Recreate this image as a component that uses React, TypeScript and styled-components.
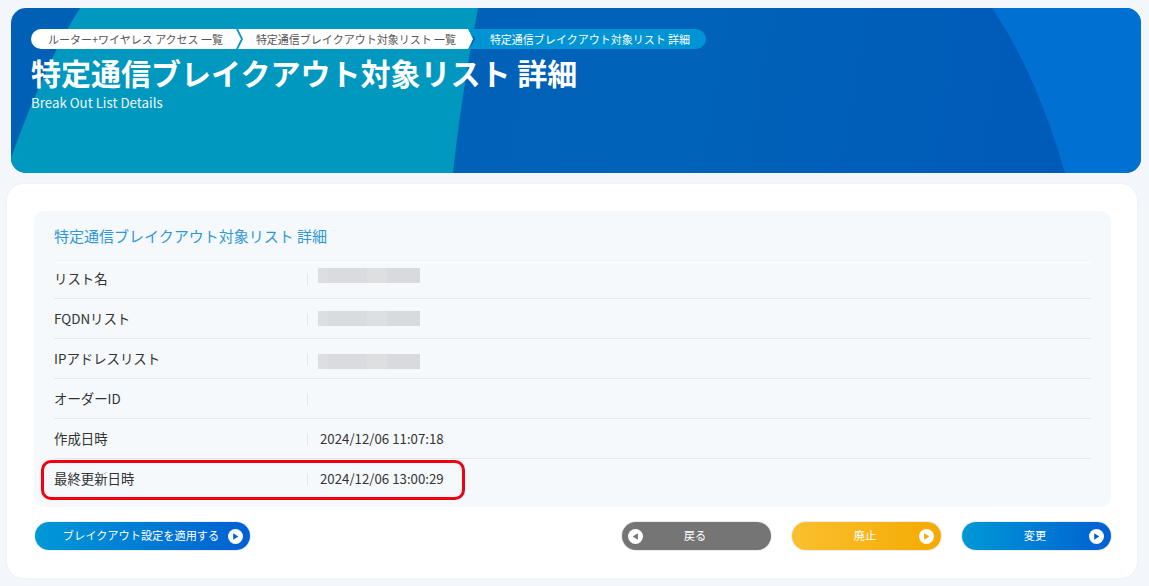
import React from "react";
import styled, { createGlobalStyle } from "styled-components";

const Global = createGlobalStyle`
  html, body { margin: 0; padding: 0; background: #f3f7fb; }
  body { font-family: "Noto Sans CJK JP", "Noto Sans", sans-serif; color: #333; }
  * { box-sizing: border-box; }
`;

const Page = styled.div`
  width: 1149px;
  height: 586px;
  overflow: hidden;
  padding: 8px 8px 8px 8px;
  display: flex;
  flex-direction: column;
  gap: 11px;
`;

const Hero = styled.header`
  position: relative;
  margin-left: 3px;
  width: 1130px;
  height: 165px;
  border-radius: 15px;
  overflow: hidden;
  background: linear-gradient(100deg, #0060b6 0%, #0062b8 60%, #0058b8 100%);
  padding: 21px 20px 0;
`;

const HeroArt = styled.svg`
  position: absolute;
  inset: 0;
  width: 100%;
  height: 100%;
`;

const HeroContent = styled.div`
  position: relative;
`;

const Crumbs = styled.ol`
  list-style: none;
  display: flex;
  margin: 0;
  padding: 0;
  height: 20px;
`;

const Crumb = styled.li<{ $active?: boolean; $first?: boolean; $w: number }>`
  width: ${(p) => p.$w}px;
  height: 20px;
  margin-right: ${(p) => (p.$active ? 0 : -3)}px;
  display: flex;
  align-items: center;
  justify-content: center;
  font-size: 11px;
  line-height: 20px;
  white-space: nowrap;
  padding: ${(p) => (p.$first ? "0 1px 0 0" : p.$active ? "0 0 0 4px" : "0 0 0 1px")};
  background: ${(p) => (p.$active ? "#0094d4" : "#fff")};
  color: ${(p) => (p.$active ? "#fff" : "#555")};
  border-radius: ${(p) => (p.$first ? "10px 0 0 10px" : p.$active ? "0 10px 10px 0" : "0")};
  clip-path: ${(p) =>
    p.$active
      ? "polygon(0 0, 100% 0, 100% 100%, 0 100%, 5px 50%)"
      : p.$first
      ? "polygon(0 0, calc(100% - 5px) 0, 100% 50%, calc(100% - 5px) 100%, 0 100%)"
      : "polygon(0 0, calc(100% - 5px) 0, 100% 50%, calc(100% - 5px) 100%, 0 100%, 5px 50%)"};
`;

const HeroTitle = styled.h1`
  margin: 0;
  font-size: 30px;
  line-height: 46px;
  font-weight: 700;
  color: #fff;
  white-space: nowrap;
`;

const HeroSub = styled.p`
  margin: -2px 0 0;
  font-size: 13.3px;
  line-height: 20px;
  color: #eef7fb;
`;

const Card = styled.main`
  margin-left: -1px;
  width: 1130px;
  height: 394px;
  background: #fff;
  border-radius: 16px;
  padding: 27px 26px 0 27px;
  box-shadow: 0 0 2px rgba(190, 205, 220, 0.35);
`;

const Panel = styled.section`
  width: 1077px;
  height: 296px;
  background: #f5f9fc;
  border-radius: 10px;
  padding: 13px 20px 0;
`;

const PanelTitle = styled.h2`
  margin: 0;
  height: 38px;
  font-size: 15px;
  line-height: 24px;
  font-weight: 400;
  color: #2f97d6;
  white-space: nowrap;
`;

const Row = styled.div<{ $first?: boolean }>`
  position: relative;
  height: ${(p) => (p.$first ? 36 : 40)}px;
  padding-bottom: ${(p) => (p.$first ? 4 : 0)}px;
  display: grid;
  grid-template-columns: 253px 1fr;
  align-items: center;
  border-top: ${(p) => (p.$first ? "1px solid #fff" : "1px solid #e4e8ec")};
`;

const Label = styled.div`
  margin-bottom: 2px;
  font-size: 13.4px;
  line-height: 20px;
  color: #333;
  white-space: nowrap;
`;

const Value = styled.div`
  height: 12px;
  border-left: 1px solid #e2e6ea;
  padding-left: 12px;
  display: flex;
  align-items: center;
  font-size: 13.25px;
  color: #333;
  white-space: nowrap;
`;

const Redacted = styled.div<{ $top: number }>`
  position: absolute;
  left: 264px;
  top: ${(p) => p.$top}px;
  width: 102px;
  height: 15px;
  background: linear-gradient(90deg, #dcdee1 0 10%, #d9dbde 10% 48%, #dddfe1 48% 68%, #d8dadd 68% 100%);
`;

const Highlight = styled.div`
  position: absolute;
  left: -13px;
  top: 1px;
  width: 424px;
  height: 40px;
  border: 3px solid #f00010;
  border-radius: 10px;
  pointer-events: none;
`;

const Actions = styled.div`
  display: flex;
  align-items: center;
  margin: 15px 0 0 1px;
`;

const Button = styled.button<{ $tone: "blue" | "gray" | "amber"; $w: number }>`
  position: relative;
  width: ${(p) => p.$w}px;
  height: 28px;
  border: 0;
  border-radius: 14px;
  padding: 0 3px 2px 0;
  margin-left: ${(p) => (p.$w > 200 ? 0 : 21)}px;
  font: inherit;
  font-size: 11.2px;
  line-height: 26px;
  color: #fff;
  text-align: center;
  box-shadow: 0 0 0 1px rgba(225, 230, 236, 0.7);
  background: ${(p) =>
    p.$tone === "gray"
      ? "#757575"
      : p.$tone === "amber"
      ? "linear-gradient(90deg, #f9c02e, #f5aa02)"
      : "linear-gradient(90deg, #0098d6, #0060d2)"};
`;

const BtnIcon = styled.svg<{ $left?: boolean }>`
  position: absolute;
  top: 6.5px;
  ${(p) => (p.$left ? "left: 6px;" : "right: 7px;")}
  width: 15px;
  height: 15px;
`;

const Spacer = styled.div`
  width: 351px;
  flex: none;
`;

const Circle: React.FC<{ left?: boolean; color: string }> = ({ left, color }) => (
  <BtnIcon $left={left} viewBox="0 0 16 16">
    <circle cx="8" cy="8" r="8" fill="#fff" />
    <path d={left ? "M10.5 4.5v7L5 8z" : "M5.5 4.5v7L11 8z"} fill={color} />
  </BtnIcon>
);

export default function App() {
  return (
    <Page>
      <Global />
      <Hero>
        <HeroArt viewBox="0 0 1130 165" preserveAspectRatio="none" aria-hidden="true">
          <path d="M69 0 H467 Q450 90 442 165 H0 V150 Q34 55 69 0 Z" fill="#0098bf" />
          <path d="M981 0 H1130 V165 H1054 Q1025 65 981 0 Z" fill="#0071d2" />
        </HeroArt>
        <HeroContent>
          <Crumbs>
            <Crumb $first $w={210}>ルーター+ワイヤレス アクセス 一覧</Crumb>
            <Crumb $w={235}>特定通信ブレイクアウト対象リスト 一覧</Crumb>
            <Crumb $active $w={236}>特定通信ブレイクアウト対象リスト 詳細</Crumb>
          </Crumbs>
          <HeroTitle>特定通信ブレイクアウト対象リスト 詳細</HeroTitle>
          <HeroSub>Break Out List Details</HeroSub>
        </HeroContent>
      </Hero>
      <Card>
        <Panel>
          <PanelTitle>特定通信ブレイクアウト対象リスト 詳細</PanelTitle>
          <Row $first>
            <Label>リスト名</Label>
            <Value />
            <Redacted $top={5} />
          </Row>
          <Row>
            <Label>FQDNリスト</Label>
            <Value />
            <Redacted $top={12} />
          </Row>
          <Row>
            <Label>IPアドレスリスト</Label>
            <Value />
            <Redacted $top={15} />
          </Row>
          <Row>
            <Label>オーダーID</Label>
            <Value />
          </Row>
          <Row>
            <Label>作成日時</Label>
            <Value>2024/12/06 11:07:18</Value>
          </Row>
          <Row>
            <Label>最終更新日時</Label>
            <Value>2024/12/06 13:00:29</Value>
            <Highlight />
          </Row>
        </Panel>
        <Actions>
          <Button $tone="blue" $w={215}>
            ブレイクアウト設定を適用する
            <Circle color="#0060d2" />
          </Button>
          <Spacer />
          <Button $tone="gray" $w={149}>
            戻る
            <Circle left color="#757575" />
          </Button>
          <Button $tone="amber" $w={149}>
            廃止
            <Circle color="#f5aa02" />
          </Button>
          <Button $tone="blue" $w={149}>
            変更
            <Circle color="#0060d2" />
          </Button>
        </Actions>
      </Card>
    </Page>
  );
}
